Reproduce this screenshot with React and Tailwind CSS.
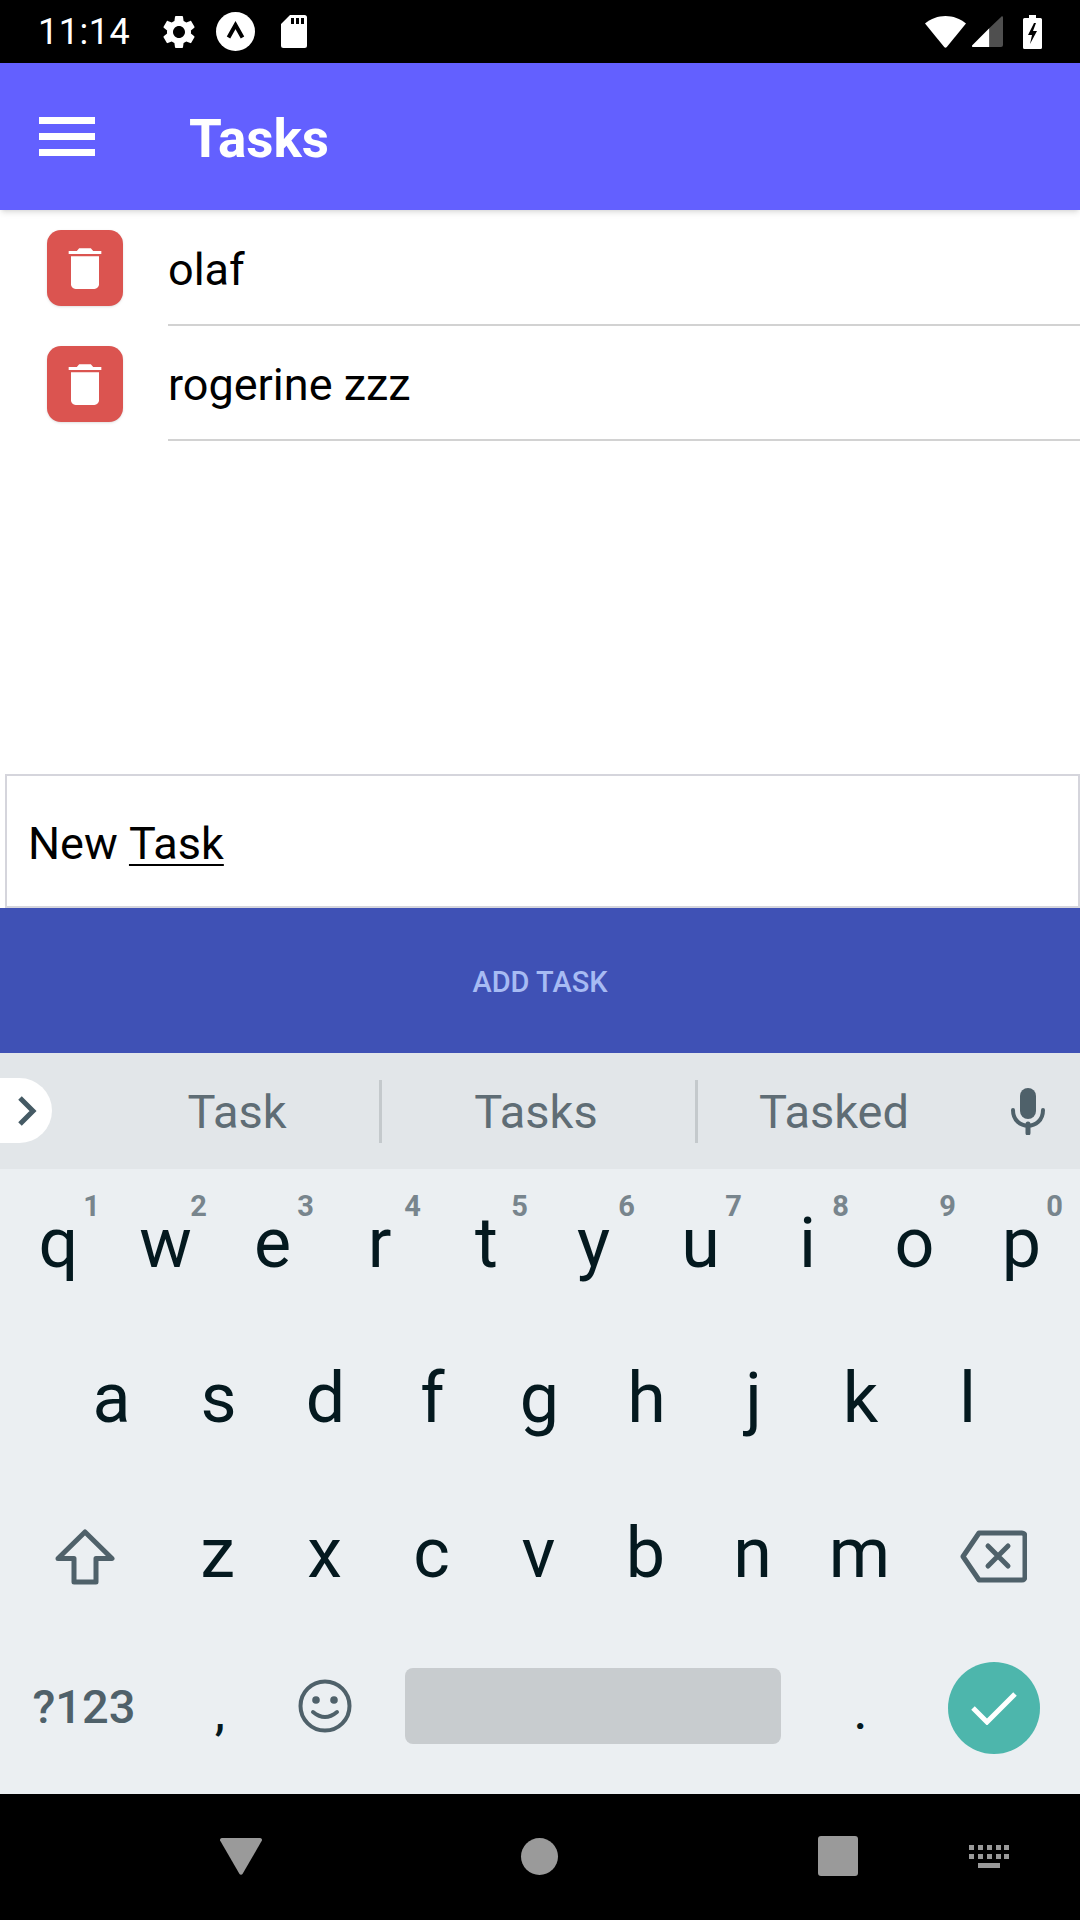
import React from "react";

const rows = [
  { name: "olaf", height: "h-[116px]" },
  { name: "rogerine zzz", height: "h-[115px]" },
];

const firstRow = [
  ["q", "1"],
  ["w", "2"],
  ["e", "3"],
  ["r", "4"],
  ["t", "5"],
  ["y", "6"],
  ["u", "7"],
  ["i", "8"],
  ["o", "9"],
  ["p", "0"],
];

const Letter = ({ children, hint }) => (
  <div className="relative w-[107px] h-full flex items-center justify-center pb-[8px]">
    {children}
    {hint && (
      <span className="absolute right-[12px] top-[23px] text-[29px] leading-none font-bold text-[#78858d]">
        {hint}
      </span>
    )}
  </div>
);

const StatusBar = () => (
  <div className="h-[63px] bg-black flex items-center pl-[38px] pr-[38px] text-white shrink-0">
    <span className="text-[36px] leading-none tracking-[0.5px] w-[124px]">11:14</span>
    <svg viewBox="0 0 24 24" className="w-[40px] h-[40px] fill-white -ml-[3px]">
      <path d="M19.14 12.94c.04-.3.06-.61.06-.94 0-.32-.02-.64-.07-.94l2.03-1.58c.18-.14.23-.41.12-.61l-1.92-3.32c-.12-.22-.37-.29-.59-.22l-2.39.96c-.5-.38-1.03-.7-1.62-.94l-.36-2.54c-.04-.24-.24-.41-.48-.41h-3.84c-.24 0-.43.17-.47.41l-.36 2.54c-.59.24-1.13.57-1.62.94l-2.39-.96c-.22-.08-.47 0-.59.22L2.74 8.87c-.12.21-.08.47.12.61l2.03 1.58c-.05.3-.09.63-.09.94s.02.64.07.94l-2.03 1.58c-.18.14-.23.41-.12.61l1.92 3.32c.12.22.37.29.59.22l2.39-.96c.5.38 1.03.7 1.62.94l.36 2.54c.05.24.24.41.48.41h3.84c.24 0 .44-.17.47-.41l.36-2.54c.59-.24 1.13-.56 1.62-.94l2.39.96c.22.08.47 0 .59-.22l1.92-3.32c.12-.22.07-.47-.12-.61l-2.01-1.58zM12 15.6c-1.98 0-3.6-1.62-3.6-3.6s1.62-3.6 3.6-3.6 3.6 1.62 3.6 3.6-1.62 3.6-3.6 3.6z" />
    </svg>
    <svg viewBox="0 0 39 39" className="w-[39px] h-[39px] ml-[17px]">
      <circle cx="19.5" cy="19.5" r="19.5" fill="#fff" />
      <path d="M12.5 25.5 L19.5 13 L26.5 25.5" fill="none" stroke="#000" strokeWidth="4" />
    </svg>
    <svg viewBox="0 0 26 33" className="w-[26px] h-[33px] ml-[26px] fill-white">
      <path d="M9 0h14.5a2.5 2.5 0 0 1 2.5 2.5v28a2.5 2.5 0 0 1-2.5 2.5h-21A2.5 2.5 0 0 1 0 30.500V9zM10 3v6h3V3zm5 0v6h3V3zm5 0v6h3V3z" fillRule="evenodd" />
    </svg>
    <div className="ml-auto flex items-center">
      <svg viewBox="0 0 41 32" className="w-[41px] h-[32px] fill-white">
        <path d="M20.500 0C28 0 35 2.700 41 7.500L21.800 31a1.700 1.700 0 0 1-2.600 0L0 7.500C6 2.700 13 0 20.500 0z" />
      </svg>
      <svg viewBox="0 0 31 31" className="w-[31px] h-[31px] ml-[6px]">
        <path d="M17.500 31H1a1 1 0 0 1-.7-1.700L17.500 12z" fill="#fff" />
        <path d="M17.500 31h11.500a2 2 0 0 0 2-2V1.500c0-1-1-1.500-1.700-.8L17.500 12z" fill="#4f4f4f" />
      </svg>
      <svg viewBox="0 0 19 34" className="w-[19px] h-[34px] ml-[20px] fill-white">
        <path
          fillRule="evenodd"
          d="M6 0h7v3h4.500A1.500 1.500 0 0 1 19 4.500V32.500a1.500 1.500 0 0 1-1.500 1.500h-16A1.500 1.500 0 0 1 0 32.500V4.500A1.500 1.500 0 0 1 1.500 3H6zM11 8 5 20h4l-2 9 7-13h-4l3-8z"
        />
      </svg>
    </div>
  </div>
);

const TrashButton = () => (
  <div className="w-[76px] h-[76px] ml-[47px] mt-[20px] shrink-0 rounded-[14px] bg-[#db5450] shadow-sm flex items-center justify-center">
    <svg viewBox="0 0 24 24" className="w-[56px] h-[56px] fill-white">
      <path d="M6 19c0 1.100.9 2 2 2h8c1.100 0 2-.9 2-2V7H6v12zM19 4.700h-3.500l-1-1.200h-5l-1 1.200H5v1.300h14V4.700z" />
    </svg>
  </div>
);

const Keyboard = () => (
  <div className="h-[625px] shrink-0 bg-[#ebeff2] text-[#04191f] text-[70px] leading-none">
    <div className="h-[155px] pl-[5px] flex">
      {firstRow.map(([k, n]) => (
        <Letter key={k} hint={n}>
          {k}
        </Letter>
      ))}
    </div>
    <div className="h-[155px] pl-[58px] flex">
      {["a", "s", "d", "f", "g", "h", "j", "k", "l"].map((k) => (
        <Letter key={k}>{k}</Letter>
      ))}
    </div>
    <div className="h-[155px] flex">
      <div className="w-[164px] pl-[6px] flex items-center justify-center">
        <svg viewBox="0 0 60 56" className="w-[60px] h-[56px] fill-none stroke-[#4f616a] stroke-[5px]" strokeLinejoin="round">
          <path d="M30 3 L57 29.500 H41 V53 H19 V29.500 H3 Z" />
        </svg>
      </div>
      {["z", "x", "c", "v", "b", "n", "m"].map((k) => (
        <Letter key={k}>{k}</Letter>
      ))}
      <div className="flex-1 pr-[6px] flex items-center justify-center">
        <svg viewBox="0 0 67 53" className="w-[67px] h-[53px] fill-none stroke-[#4f616a] stroke-[5px]" strokeLinejoin="round" strokeLinecap="round">
          <path d="M19 3 H62 a3 3 0 0 1 3 3 V47 a3 3 0 0 1 -3 3 H19 L3 26.500 Z" />
          <path d="M28 16 L48 36 M48 16 L28 36" />
        </svg>
      </div>
    </div>
    <div className="h-[144px] flex items-center">
      <div className="w-[168px] text-center text-[47px] font-medium text-[#4f616a]">?123</div>
      <div className="w-[103px] pl-[1px] pt-[14px] text-center text-[46px] font-medium">,</div>
      <div className="w-[107px] flex justify-center">
        <svg viewBox="0 0 54 54" className="w-[54px] h-[54px]">
          <circle cx="27" cy="27" r="24.500" fill="none" stroke="#4f616a" strokeWidth="4" />
          <circle cx="18" cy="21" r="3.800" fill="#4f616a" />
          <circle cx="36" cy="21" r="3.800" fill="#4f616a" />
          <path d="M15 33 Q27 43 39 33" fill="none" stroke="#4f616a" strokeWidth="4" strokeLinecap="round" />
        </svg>
      </div>
      <div className="w-[376px] h-[76px] ml-[27px] rounded-[8px] bg-[#c8cccf]" />
      <div className="w-[79px] ml-[40px] pt-[14px] text-center text-[46px] font-medium">.</div>
      <div className="flex-1 pl-[7px] pt-[4px] flex justify-center">
        <div className="w-[92px] h-[92px] rounded-full bg-[#4db6ac] flex items-center justify-center">
          <svg viewBox="0 0 46 34" className="w-[46px] h-[34px] fill-none stroke-white stroke-[5px]">
            <path d="M2 17 L16 31 L44 3" />
          </svg>
        </div>
      </div>
    </div>
  </div>
);

const App = () => {
  return (
    <div className="w-[1080px] h-[1920px] flex flex-col bg-white font-['Roboto',sans-serif] overflow-hidden">
      <StatusBar />

      {/* App bar */}
      <div className="relative z-10 h-[147px] shrink-0 bg-[#6360ff] shadow-md flex items-center pl-[39px]">
        <div className="w-[56px] flex flex-col gap-[9px]">
          <div className="h-[7px] bg-white" />
          <div className="h-[7px] bg-white" />
          <div className="h-[7px] bg-white" />
        </div>
        <span className="ml-[94px] pt-[5px] text-[53px] leading-none font-bold text-white">Tasks</span>
      </div>

      {/* Task list */}
      <div className="flex-1">
        {rows.map((row) => (
          <div key={row.name} className={`flex ${row.height}`}>
            <TrashButton />
            <div className="flex-1 ml-[45px] border-b-2 border-[#d2d2d2] flex items-center text-[45px] leading-none text-black pt-[4px]">
              {row.name}
            </div>
          </div>
        ))}
      </div>

      {/* New task input */}
      <div className="h-[134px] shrink-0 ml-[5px] border-2 border-[#d5d5dc] bg-white flex items-center pl-[21px] pt-[4px] text-[45px] leading-none text-black">
        New&nbsp;<span className="underline decoration-2 underline-offset-[5px]">Task</span>
      </div>
      <div className="h-[145px] shrink-0 bg-[#3f51b5] flex items-center justify-center pt-[5px] text-[29px] font-medium text-[#a7bbf3]">
        ADD TASK
      </div>

      {/* Suggestion strip */}
      <div className="relative h-[116px] shrink-0 bg-[#e2e6e9] flex items-center text-[47px] leading-none text-[#5f6d75]">
        <div className="absolute left-0 top-[25px] w-[52px] h-[65px] bg-white rounded-r-full flex items-center">
          <svg viewBox="0 0 20 32" className="w-[20px] h-[32px] ml-[17px] fill-none stroke-[#455a64] stroke-[5px]">
            <path d="M3 3 L16 16 L3 29" />
          </svg>
        </div>
        <div className="w-[379px] text-center pl-[95px]">Task</div>
        <div className="w-[3px] h-[63px] bg-[#c4c9cc]" />
        <div className="w-[313px] pr-[5px] text-center">Tasks</div>
        <div className="w-[3px] h-[63px] bg-[#c4c9cc]" />
        <div className="w-[272px] text-center">Tasked</div>
        <svg viewBox="0 0 34 47" className="w-[34px] h-[47px] ml-[41px]">
          <rect x="9" y="0" width="16" height="31" rx="8" fill="#4f616a" />
          <path d="M2 22 C2 43 32 43 32 22" fill="none" stroke="#4f616a" strokeWidth="4" strokeLinecap="round" />
          <path d="M17 36 V45" stroke="#4f616a" strokeWidth="5" strokeLinecap="round" />
        </svg>
      </div>

      <Keyboard />

      {/* Navigation bar */}
      <div className="h-[126px] shrink-0 bg-black flex items-center pl-[220px]">
        <svg viewBox="0 0 42 37" className="w-[42px] h-[37px] mt-[-1px] fill-[#9a9a9a]">
          <path d="M2 0 H40 a2 2 0 0 1 1.900 2.600 L22.500 36 a1.800 1.800 0 0 1 -3 0 L.1 2.600 A2 2 0 0 1 2 0z" />
        </svg>
        <div className="w-[37px] h-[37px] ml-[259px] mt-[-2px] rounded-full bg-[#9a9a9a]" />
        <div className="w-[40px] h-[40px] ml-[260px] mt-[-2px] rounded-[3px] bg-[#9a9a9a]" />
        <svg viewBox="0 0 40 23" className="w-[40px] h-[23px] ml-[111px] mt-[-2px] fill-[#9a9a9a]">
          <path d="M0 0h5v5H0zM9 0h5v5H9zM18 0h5v5h-5zM27 0h5v5h-5zM35 0h5v5h-5zM0 9h5v5H0zM9 9h5v5H9zM18 9h5v5h-5zM27 9h5v5h-5zM35 9h5v5h-5zM9 18h22v5H9z" />
        </svg>
      </div>
    </div>
  );
};

export default App;
